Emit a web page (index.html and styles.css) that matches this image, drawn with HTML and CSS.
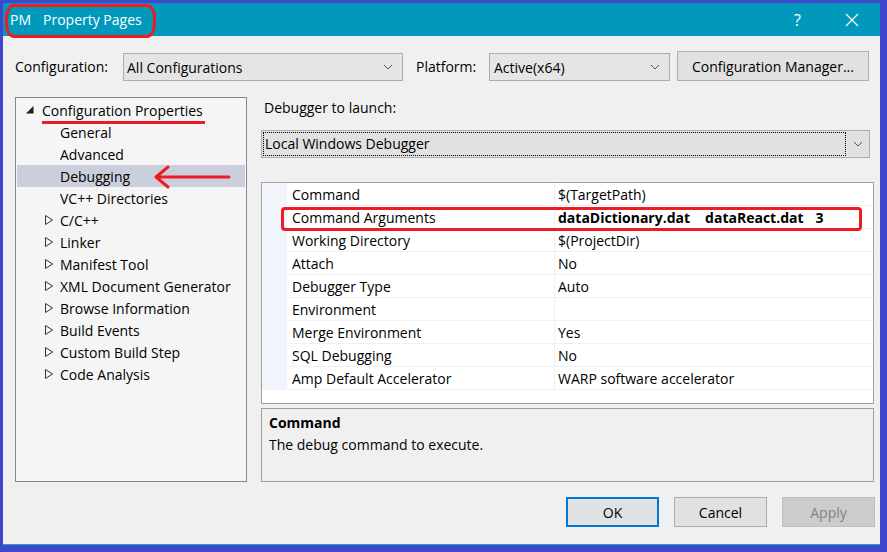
FILE: index.html
```html
<!DOCTYPE html>
<html>
<head>
<meta charset="utf-8">
<link rel="stylesheet" href="styles.css">
</head>
<body>
<div class="window">
  <div class="titlebar">
    <span class="app">PM</span>
    <span class="title">Property Pages</span>
    <span class="spacer"></span>
    <span class="help">?</span>
    <svg class="close" width="14" height="14" viewBox="0 0 14 14"><path d="M1 1 L13 13 M13 1 L1 13" stroke="#fff" stroke-width="1.2" fill="none"/></svg>
    <div class="mark-title"></div>
  </div>
  <div class="content">
    <div class="config-row">
      <span class="lbl lbl-config">Configuration:</span>
      <div class="select sel-config"><span>All Configurations</span><svg class="chev" width="10" height="6" viewBox="0 0 10 6"><path d="M1 1 L5 5 L9 1" stroke="#555" fill="none"/></svg></div>
      <span class="lbl lbl-platform">Platform:</span>
      <div class="select sel-platform"><span>Active(x64)</span><svg class="chev" width="10" height="6" viewBox="0 0 10 6"><path d="M1 1 L5 5 L9 1" stroke="#555" fill="none"/></svg></div>
      <div class="btn btn-mgr">Configuration Manager...</div>
    </div>
    <div class="main">
      <div class="tree">
        <div class="item l0"><svg class="tw" width="18" height="22" viewBox="0 0 18 22"><polygon points="9.5,7 9.5,14.5 2,14.5" fill="#1e1e1e"/></svg><span>Configuration Properties</span></div>
        <div class="item l1"><span class="tw"></span><span>General</span></div>
        <div class="item l1"><span class="tw"></span><span>Advanced</span></div>
        <div class="item l1 sel"><span class="tw"></span><span>Debugging</span></div>
        <div class="item l1"><span class="tw"></span><span>VC++ Directories</span></div>
        <div class="item l1"><svg class="tw" width="18" height="22" viewBox="0 0 18 22"><polygon points="3.5,6.5 10.5,11 3.5,15.5" fill="none" stroke="#333"/></svg><span>C/C++</span></div>
        <div class="item l1"><svg class="tw" width="18" height="22" viewBox="0 0 18 22"><polygon points="3.5,6.5 10.5,11 3.5,15.5" fill="none" stroke="#333"/></svg><span>Linker</span></div>
        <div class="item l1"><svg class="tw" width="18" height="22" viewBox="0 0 18 22"><polygon points="3.5,6.5 10.5,11 3.5,15.5" fill="none" stroke="#333"/></svg><span>Manifest Tool</span></div>
        <div class="item l1"><svg class="tw" width="18" height="22" viewBox="0 0 18 22"><polygon points="3.5,6.5 10.5,11 3.5,15.5" fill="none" stroke="#333"/></svg><span>XML Document Generator</span></div>
        <div class="item l1"><svg class="tw" width="18" height="22" viewBox="0 0 18 22"><polygon points="3.5,6.5 10.5,11 3.5,15.5" fill="none" stroke="#333"/></svg><span>Browse Information</span></div>
        <div class="item l1"><svg class="tw" width="18" height="22" viewBox="0 0 18 22"><polygon points="3.5,6.5 10.5,11 3.5,15.5" fill="none" stroke="#333"/></svg><span>Build Events</span></div>
        <div class="item l1"><svg class="tw" width="18" height="22" viewBox="0 0 18 22"><polygon points="3.5,6.5 10.5,11 3.5,15.5" fill="none" stroke="#333"/></svg><span>Custom Build Step</span></div>
        <div class="item l1"><svg class="tw" width="18" height="22" viewBox="0 0 18 22"><polygon points="3.5,6.5 10.5,11 3.5,15.5" fill="none" stroke="#333"/></svg><span>Code Analysis</span></div>
        <div class="mark-underline"></div>
        <svg class="mark-arrow" width="78" height="24" viewBox="0 0 78 24"><path d="M2 12 L75 12 M2 12 L14 2 M2 12 L14 22" stroke="#ed1c24" stroke-width="3" fill="none" stroke-linecap="round"/></svg>
      </div>
      <div class="right">
        <div class="dbg-label">Debugger to launch:</div>
        <div class="dropdown">
          <div class="dd-text"><span>Local Windows Debugger</span></div>
          <div class="dd-btn"><svg width="10" height="6" viewBox="0 0 10 6"><path d="M1 1 L5 5 L9 1" stroke="#555" fill="none"/></svg></div>
        </div>
        <div class="grid">
          <div class="row"><span class="gut"></span><span class="name">Command</span><span class="val">$(TargetPath)</span></div>
          <div class="row"><span class="gut"></span><span class="name">Command Arguments</span><span class="val bold"><span>dataDictionary.dat</span><span class="sp1">dataReact.dat</span><span class="sp2">3</span></span></div>
          <div class="row"><span class="gut"></span><span class="name">Working Directory</span><span class="val">$(ProjectDir)</span></div>
          <div class="row"><span class="gut"></span><span class="name">Attach</span><span class="val">No</span></div>
          <div class="row"><span class="gut"></span><span class="name">Debugger Type</span><span class="val">Auto</span></div>
          <div class="row"><span class="gut"></span><span class="name">Environment</span><span class="val"></span></div>
          <div class="row"><span class="gut"></span><span class="name">Merge Environment</span><span class="val">Yes</span></div>
          <div class="row"><span class="gut"></span><span class="name">SQL Debugging</span><span class="val">No</span></div>
          <div class="row"><span class="gut"></span><span class="name">Amp Default Accelerator</span><span class="val">WARP software accelerator</span></div>
          <div class="mark-row"></div>
        </div>
        <div class="desc">
          <div class="desc-title">Command</div>
          <div>The debug command to execute.</div>
        </div>
      </div>
    </div>
    <div class="buttons">
      <div class="btn btn-ok">OK</div>
      <div class="btn">Cancel</div>
      <div class="btn btn-disabled">Apply</div>
    </div>
  </div>
</div>
</body>
</html>
```

FILE: styles.css
```css
* { box-sizing: border-box; }
html, body { margin: 0; padding: 0; }
body {
  background: #3f48cc;
  font-family: "Open Sans", "Noto Sans", sans-serif;
  font-size: 14px;
  color: #000;
  width: 887px;
  height: 552px;
  overflow: hidden;
}
.window {
  margin: 3px 7px 0 3px;
  height: 542px;
  background: #f0f0f0;
  border-bottom: 1px solid #1fa3c4;
  display: flex;
  flex-direction: column;
}
.titlebar {
  height: 33px;
  flex: none;
  background: #0099bc;
  color: #fff;
  display: flex;
  align-items: center;
  padding-left: 7px;
  position: relative;
  font-size: 14px;
}
.app { margin-right: 12px; }
.spacer { flex: 1; }
.help { margin-right: 44px; font-size: 16px; }
.close { margin-right: 21px; }
.mark-title {
  position: absolute;
  left: 2px;
  top: 1px;
  width: 151px;
  height: 34px;
  border: 3px solid #ed1c24;
  border-radius: 9px / 14px;
}
.content {
  flex: 1;
  padding: 15px 6px 0 12px;
  display: flex;
  flex-direction: column;
}
.config-row {
  height: 30px;
  display: flex;
  align-items: center;
}
.lbl-config { width: 108px; }
.lbl-platform { width: 73px; margin-left: 13px; }
.select {
  height: 28px;
  margin-top: 2px;
  border: 1px solid #acacac;
  background: #e5e5e5;
  display: flex;
  align-items: center;
  justify-content: space-between;
  padding: 0 9px 0 3px;
}
.sel-config { width: 280px; }
.sel-platform { width: 181px; padding-left: 4px; }
.btn {
  height: 30px;
  width: 93px;
  border: 1px solid #adadad;
  background: #e1e1e1;
  display: flex;
  align-items: center;
  justify-content: center;
}
.btn-mgr { width: 192px; margin-left: 7px; }
.main {
  margin-top: 16px;
  height: 385px;
  display: flex;
  gap: 14px;
}
.tree {
  width: 232px;
  border: 1px solid #828790;
  background: #f5f5f5;
  padding-top: 1px;
  position: relative;
}
.item {
  height: 22px;
  display: flex;
  align-items: center;
  white-space: nowrap;
}
.tw { width: 18px; height: 22px; flex: none; display: block; }
.l0 { padding-left: 8px; }
.l1 { padding-left: 26px; }
.item.sel { background: #cbcfdc; margin: 0 1px; padding-left: 25px; }
.mark-underline {
  position: absolute;
  left: 26px;
  top: 23px;
  width: 163px;
  height: 3px;
  background: #ed1c24;
}
.mark-arrow {
  position: absolute;
  left: 138px;
  top: 67px;
}
.right {
  width: 613px;
  display: flex;
  flex-direction: column;
}
.dbg-label {
  height: 20px;
  line-height: 20px;
  padding: 1px 0 0 3px;
}
.dropdown {
  margin-top: 13px;
  height: 28px;
  margin-right: 4px;
  border: 1px solid #adadad;
  background: #e1e1e1;
  display: flex;
}
.dd-text {
  flex: 1;
  margin: 1px 0 1px 1px;
  border: 1px dotted #000;
  display: flex;
  align-items: center;
  padding-left: 1px;
}
.dd-btn {
  width: 23px;
  display: flex;
  align-items: center;
  justify-content: center;
  padding-left: 1px;
}
.grid {
  margin-top: 24px;
  height: 223px;
  border: 1px solid #a0a0a0;
  background: #fff;
  position: relative;
}
.row {
  height: 23px;
  display: grid;
  grid-template-columns: 25px 267px 1fr;
}
.gut { background: #f1f5fb; }
.name, .val {
  border-bottom: 1px solid #f0f0f4;
  display: flex;
  align-items: center;
  white-space: nowrap;
  padding-top: 2px;
}
.name { padding-left: 5px; }
.val { border-left: 1px solid #f0f0f4; padding-left: 3px; }
.bold { font-weight: 700; }
.sp1 { margin-left: 15px; }
.sp2 { margin-left: 12px; }
.mark-row {
  position: absolute;
  left: 19px;
  top: 24px;
  width: 581px;
  height: 24px;
  border: 3px solid #ed1c24;
  border-radius: 4px;
}
.desc {
  margin-top: 4px;
  height: 74px;
  border: 1px solid #a0a0a0;
  padding: 3px 0 0 7px;
  line-height: 22px;
}
.desc-title { font-weight: 700; }
.buttons {
  margin-top: 15px;
  display: flex;
  justify-content: flex-end;
  gap: 15px;
  margin-right: -1px;
}
.btn-ok { border: 2px solid #0078d7; }
.btn-disabled { background: #cccccc; border-color: #bfbfbf; color: #838383; }
```
